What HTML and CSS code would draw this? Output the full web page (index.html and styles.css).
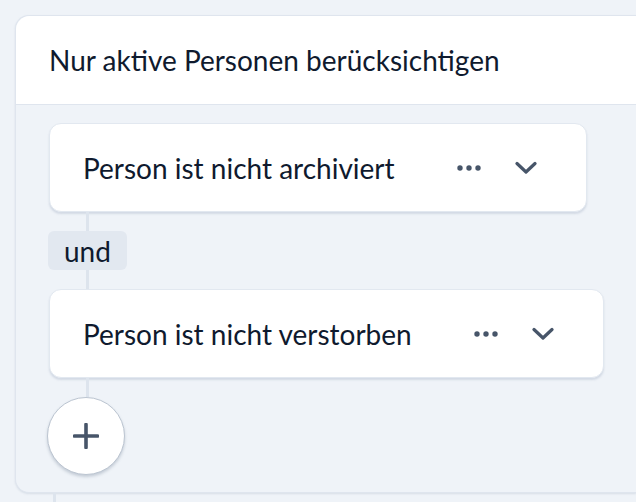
FILE: index.html
```html
<!DOCTYPE html>
<html lang="de">
<head>
    <meta charset="UTF-8">
    <meta name="viewport" content="width=device-width, initial-scale=1.0">
    <title>Filter</title>
    <link rel="stylesheet" href="styles.css">
</head>
<body>

    <div class="panel">
        <div class="panel-header">Nur aktive Personen berücksichtigen</div>

        <div class="panel-body">
            <div class="rule">
                <span class="rule-text">Person ist nicht archiviert</span>
                <button class="icon-btn" aria-label="Mehr">
                    <svg width="24" height="6" viewBox="0 0 24 6"><circle cx="3" cy="3" r="2.7"/><circle cx="12" cy="3" r="2.7"/><circle cx="21" cy="3" r="2.7"/></svg>
                </button>
                <button class="icon-btn" aria-label="Aufklappen">
                    <svg width="22" height="14" viewBox="0 0 22 14"><path d="M2 2.5 L11 11 L20 2.5" fill="none" stroke-width="3.2" stroke-linecap="round" stroke-linejoin="round"/></svg>
                </button>
            </div>

            <div class="connector"></div>
            <div class="operator">und</div>
            <div class="connector"></div>

            <div class="rule">
                <span class="rule-text">Person ist nicht verstorben</span>
                <button class="icon-btn" aria-label="Mehr">
                    <svg width="24" height="6" viewBox="0 0 24 6"><circle cx="3" cy="3" r="2.7"/><circle cx="12" cy="3" r="2.7"/><circle cx="21" cy="3" r="2.7"/></svg>
                </button>
                <button class="icon-btn" aria-label="Aufklappen">
                    <svg width="22" height="14" viewBox="0 0 22 14"><path d="M2 2.5 L11 11 L20 2.5" fill="none" stroke-width="3.2" stroke-linecap="round" stroke-linejoin="round"/></svg>
                </button>
            </div>

            <div class="connector"></div>
            <button class="add-btn" aria-label="Regel hinzufügen">
                <svg width="26" height="26" viewBox="0 0 26 26"><path d="M13 1.5 V24.5 M1.5 13 H24.5" fill="none" stroke-width="3.6" stroke-linecap="round"/></svg>
            </button>
        </div>
    </div>
    <div class="tail"></div>

</body>
</html>
```

FILE: styles.css
```css
body {
    font-family: Lato, "Open Sans", sans-serif;
    margin: 0;
    padding: 15px 0 0 15px;
    background-color: #eff3f8;
    color: #0f1a2e;
    overflow: hidden;
}
/* panel runs on past the right edge of the window */
.panel {
    border: 1px solid #dfe5ee;
    border-right: none;
    border-radius: 14px 0 0 14px;
    background-color: #eff3f8;
    box-shadow: 0 1px 2px rgba(148, 163, 184, 0.25);
}
.panel-header {
    height: 88px;
    display: flex;
    align-items: center;
    padding-left: 33px;
    font-size: 28px;
    background-color: white;
    border-bottom: 1px solid #dfe5ee;
    border-radius: 14px 0 0 0;
}
.panel-body {
    display: flex;
    flex-direction: column;
    align-items: flex-start;
    padding: 18px 0 17px 33px;
}
.rule {
    height: 87px;
    display: flex;
    align-items: center;
    padding: 0 31px 0 33px;
    background-color: white;
    border: 1px solid #e2e8f0;
    border-radius: 12px;
    box-shadow: 0 2px 2px rgba(148, 163, 184, 0.3);
    font-size: 28px;
}
.rule-text {
    margin-right: 46px;
}
.icon-btn {
    width: 57px;
    height: 40px;
    display: flex;
    justify-content: center;
    align-items: center;
    padding: 0;
    background: none;
    border: none;
    cursor: pointer;
    fill: #475569;
    stroke: #475569;
}
.icon-btn circle {
    stroke: none;
}
.connector {
    width: 3px;
    height: 19px;
    margin-left: 37px;
    background-color: #dde4ed;
}
.operator {
    height: 39px;
    display: flex;
    align-items: center;
    padding: 0 16px;
    margin-left: -1px;
    background-color: #e2e8f0;
    border-radius: 6px;
    font-size: 28px;
}
.add-btn {
    width: 78px;
    height: 78px;
    margin-left: -2px;
    display: flex;
    justify-content: center;
    align-items: center;
    padding: 0;
    background-color: white;
    border: 1.5px solid #bcc5d1;
    border-radius: 50%;
    box-shadow: 0 2px 3px rgba(100, 116, 139, 0.3);
    stroke: #475569;
    cursor: pointer;
}
.tail {
    width: 3px;
    height: 20px;
    margin-left: 38px;
    background-color: #dde4ed;
}
```
